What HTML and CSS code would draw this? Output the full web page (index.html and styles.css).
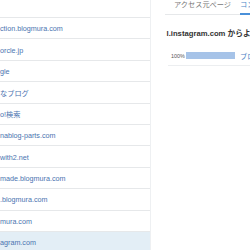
FILE: index.html
```html
<!DOCTYPE html>
<html lang="ja">
<head>
    <meta charset="UTF-8">
    <meta name="viewport" content="width=device-width, initial-scale=1.0">
    <title>アクセス解析</title>
    <link rel="stylesheet" href="styles.css">
</head>
<body>
    <div class="page">
        <aside class="sources">
            <div class="sources-head"></div>
            <ul class="source-list">
                <li><a href="#">ction.blogmura.com</a></li>
                <li><a href="#">orcle.jp</a></li>
                <li><a href="#">gle</a></li>
                <li><a href="#">なブログ</a></li>
                <li><a href="#">o!検索</a></li>
                <li><a href="#">nablog-parts.com</a></li>
                <li><a href="#">with2.net</a></li>
                <li><a href="#">made.blogmura.com</a></li>
                <li><a href="#">.blogmura.com</a></li>
                <li><a href="#">mura.com</a></li>
                <li class="is-active"><a href="#">agram.com</a></li>
            </ul>
        </aside>
        <main class="detail">
            <nav class="tabs">
                <span class="tab">アクセス元ページ</span>
                <span class="tab tab-active">コンテンツ</span>
            </nav>
            <h2 class="detail-title">l.instagram.com からよく見られているページ</h2>
            <div class="rank-row">
                <span class="rank-pct">100%</span>
                <span class="rank-bar"><span class="rank-fill" style="width: 100%"></span></span>
                <a class="rank-link" href="#">ブログトップ</a>
            </div>
        </main>
    </div>
</body>
</html>
```

FILE: styles.css
```css
body {
    margin: 0;
    font-family: 'Liberation Sans', 'Noto Sans CJK JP', sans-serif;
    background: #fff;
    color: #333;
    overflow: hidden;
}

.page {
    display: flex;
    width: 250px;
    height: 250px;
}

/* 左側：アクセス元一覧 */
.sources {
    flex: none;
    width: 150px;
    border-right: 1px solid #eef0f2;
}

.sources-head {
    height: 17px;
}

.source-list {
    list-style: none;
    margin: 0;
    padding: 0;
}

.source-list li {
    box-sizing: border-box;
    height: 21.4px;
    border-top: 1px solid #e6e8ea;
    display: flex;
    align-items: center;
    padding-top: 1px;
    font-size: 7.2px;
    white-space: nowrap;
    overflow: hidden;
}

.source-list a {
    color: #4a74b0;
    text-decoration: none;
}

.source-list .is-active {
    background: #e3eef6;
}

/* 右側：詳細 */
.detail {
    flex: 1;
    min-width: 0;
    padding-left: 14px;
    overflow: hidden;
}

.tabs {
    display: flex;
    gap: 9px;
    padding-left: 9px;
    border-bottom: 1px solid #e6e8ea;
    white-space: nowrap;
}

.tab {
    flex: none;
    height: 14px;
    box-sizing: border-box;
    padding-top: 1px;
    line-height: 8px;
    font-size: 7.2px;
    color: #777;
}

.tab-active {
    color: #4a86c8;
    border-bottom: 2px solid #4a90d9;
    margin-bottom: -1px;
    height: 15px;
}

.detail-title {
    margin: 14px 0 0;
    padding-left: 1.5px;
    font-size: 7.7px;
    line-height: 10px;
    font-weight: bold;
    color: #333;
    white-space: nowrap;
}

.rank-row {
    display: flex;
    align-items: center;
    height: 19px;
    margin: 7px 0 0 3px;
    padding-left: 3px;
    border-bottom: 1px solid #eceef0;
    white-space: nowrap;
}

.rank-pct {
    flex: none;
    width: 15px;
    font-size: 5.4px;
    color: #555;
}

.rank-bar {
    flex: none;
    width: 49px;
    height: 7px;
    margin-right: 5px;
}

.rank-fill {
    display: block;
    height: 100%;
    background: #a6c3e8;
}

.rank-link {
    font-size: 7.2px;
    color: #4a7fc4;
    text-decoration: none;
}
```
